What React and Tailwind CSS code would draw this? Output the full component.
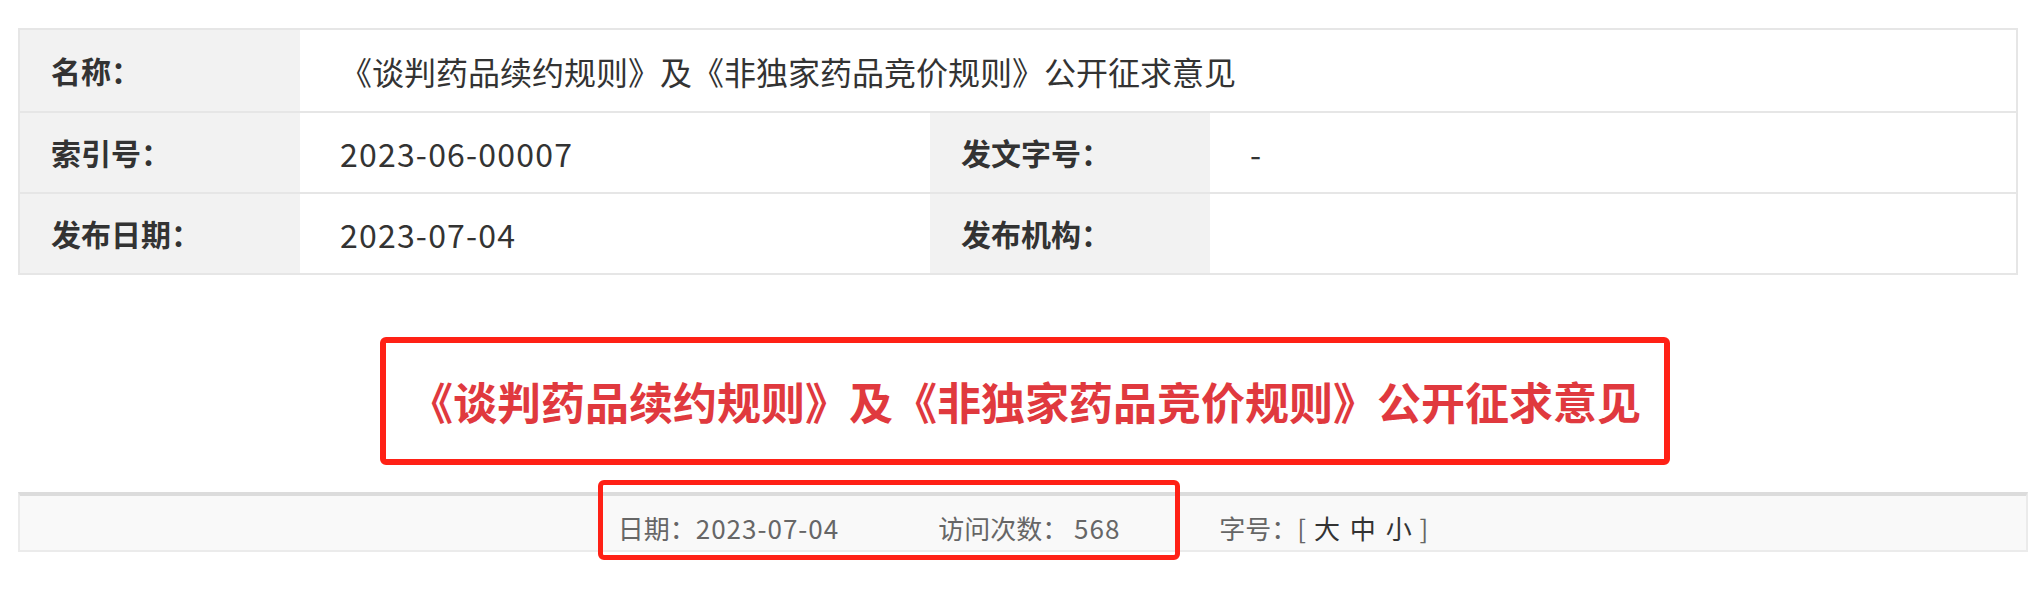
import React from "react";

function Label({ children }) {
  return (
    <div className="flex w-[280px] shrink-0 items-center bg-[#f2f2f2] pl-[31px] text-[30px] font-bold text-[#333]">
      {children}
    </div>
  );
}

function Value({ children, className = "" }) {
  return (
    <div className={`flex items-center pl-[40px] text-[32px] text-[#333] ${className}`}>
      {children}
    </div>
  );
}

function Row({ children, first }) {
  return (
    <div className={`flex h-[81px] ${first ? "" : "border-t-2 border-[#e6e6e6]"}`}>
      {children}
    </div>
  );
}

export default function App() {
  return (
    <div className="min-h-screen bg-white pl-[18px] pt-[28px] font-['Noto_Sans_CJK_SC',sans-serif]">
      <div className="w-[2010px]">
        {/* info table */}
        <div className="box-content w-[1996px] border-2 border-[#e6e6e6]">
          <Row first>
            <Label>名称：</Label>
            <Value className="flex-1">
              《谈判药品续约规则》及《非独家药品竞价规则》公开征求意见
            </Value>
          </Row>
          <Row>
            <Label>索引号：</Label>
            <Value className="w-[630px] tracking-[1.2px]">2023-06-00007</Value>
            <Label>发文字号：</Label>
            <Value className="flex-1">-</Value>
          </Row>
          <Row>
            <Label>发布日期：</Label>
            <Value className="w-[630px] tracking-[1.2px]">2023-07-04</Value>
            <Label>发布机构：</Label>
            <Value className="flex-1"></Value>
          </Row>
        </div>

        {/* title */}
        <div className="mt-[62px] flex justify-center pl-[4px]">
          <div className="rounded-md border-[6px] border-[#ff2116] px-[23px] py-[30px]">
            <h1 className="whitespace-nowrap text-[44px] font-bold leading-[56px] text-[#e0393e]">
              《谈判药品续约规则》及《非独家药品竞价规则》公开征求意见
            </h1>
          </div>
        </div>

        {/* footer bar */}
        <div className="relative mt-[27px] flex h-[60px] items-center justify-center gap-[99px] border-x-2 border-b-2 border-t-4 border-[#ebebeb] border-t-[#dcdcdc] bg-[#f9f9f9] pt-[8px] text-[26px] text-[#666]">
          <span>
            日期：<span className="tracking-[1px]">2023-07-04</span>
          </span>
          <span>
            访问次数： <span className="tracking-[1px]">568</span>
          </span>
          <span>
            字号：[ <span className="px-[2px] text-[#333]">大</span>{" "}
            <span className="px-[2px] text-[#333]">中</span>{" "}
            <span className="px-[2px] text-[#333]">小</span> ]
          </span>
          <div className="absolute left-[578px] top-[-16px] h-[80px] w-[582px] rounded-md border-[5px] border-[#ff2116]"></div>
        </div>
      </div>
    </div>
  );
}
